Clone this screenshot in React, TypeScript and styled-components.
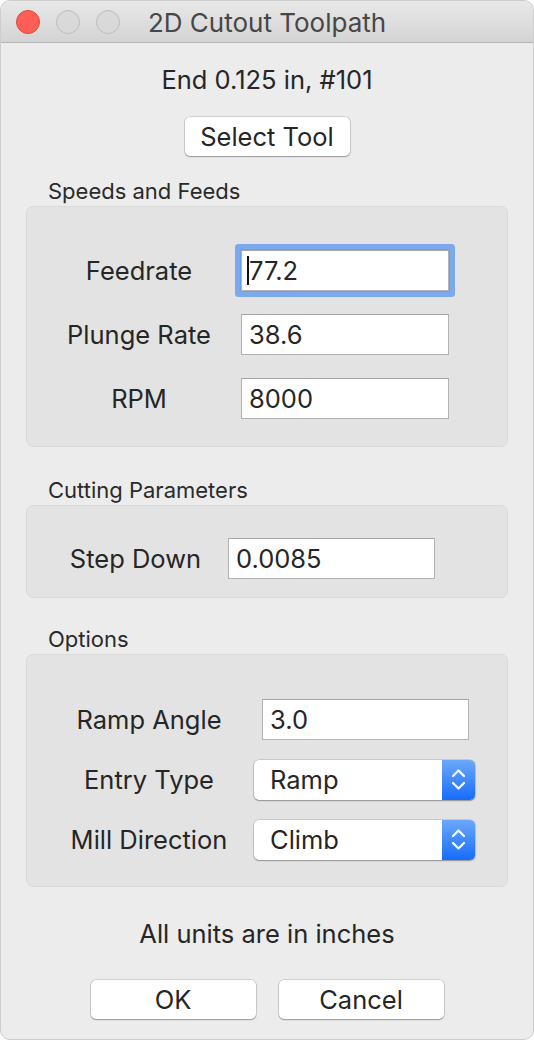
import React from 'react';
import styled, { createGlobalStyle } from 'styled-components';

const textColor = '#262626';
const bodySize = '25.5px';

const GlobalStyle = createGlobalStyle`
    html, body {
        margin: 0;
        padding: 0;
        background: #ffffff;
    }
    body {
        font-family: Inter, "Liberation Sans", Arial, sans-serif;
        -webkit-font-smoothing: antialiased;
    }
`;

const Window = styled.div`
    width: 534px;
    height: 1040px;
    box-sizing: border-box;
    background: #ececec;
    border: 1px solid #cdcdcd;
    border-radius: 10px;
    overflow: hidden;
    display: flex;
    flex-direction: column;
`;

const TitleBar = styled.div`
    height: 42px;
    box-sizing: border-box;
    background: linear-gradient(#e8e8e8, #d4d4d4);
    border-bottom: 1px solid #b6b6b6;
    display: grid;
    grid-template-columns: 1fr auto 1fr;
    align-items: center;
`;

const Lights = styled.div`
    display: flex;
    gap: 16px;
    padding-left: 15px;
`;

const Light = styled.span<{ $color: string; $edge: string }>`
    width: 24px;
    height: 24px;
    box-sizing: border-box;
    border-radius: 50%;
    background: ${p => p.$color};
    border: 1px solid ${p => p.$edge};
`;

const Title = styled.div`
    font-size: 26px;
    color: #474747;
    padding-top: 2px;
`;

const Content = styled.div`
    display: flex;
    flex-direction: column;
    padding: 0 25px;
`;

const Header = styled.div`
    margin-top: 22px;
    font-size: ${bodySize};
    line-height: 30px;
    color: ${textColor};
    text-align: center;
`;

const PushButton = styled.button<{ $width: number }>`
    width: ${p => p.$width}px;
    height: 39px;
    padding: 0;
    border: none;
    border-radius: 5px;
    background: #ffffff;
    box-shadow: 0 0 0 0.5px rgba(0, 0, 0, 0.22), 0 1px 1.5px rgba(0, 0, 0, 0.28);
    font-family: inherit;
    font-size: ${bodySize};
    color: ${textColor};
`;

const CenterRow = styled.div<{ $top: number }>`
    display: flex;
    justify-content: center;
    gap: 23px;
    margin-top: ${p => p.$top}px;
`;

const SectionLabel = styled.div<{ $top: number }>`
    margin-top: ${p => p.$top}px;
    margin-bottom: 2px;
    padding-left: 22px;
    font-size: 22px;
    line-height: 26px;
    color: #2a2a2a;
`;

const Group = styled.div<{ $height: number; $top: number; $gap: number; $indent: number }>`
    height: ${p => p.$height}px;
    box-sizing: border-box;
    background: #e3e3e3;
    border: 1px solid #dadada;
    border-radius: 7px;
    padding: ${p => p.$top}px 0 0 ${p => p.$indent}px;
    display: flex;
    flex-direction: column;
    gap: ${p => p.$gap}px;
`;

const Row = styled.div`
    display: flex;
    align-items: center;
    height: 41px;
`;

const Label = styled.div<{ $width: number }>`
    width: ${p => p.$width}px;
    text-align: center;
    font-size: ${bodySize};
    color: ${textColor};
`;

const Field = styled.div<{ $width: number; $focused?: boolean; $offset?: number }>`
    width: ${p => p.$width}px;
    height: 41px;
    box-sizing: border-box;
    margin-left: ${p => p.$offset ?? 0}px;
    background: #ffffff;
    border: 1px solid #b3b3b3;
    border-top-color: #a5a5a5;
    border-radius: ${p => (p.$focused ? '1px' : '0')};
    box-shadow: ${p => (p.$focused ? '0 0 0 1px #6f9fe6, 0 0 0 6px #7ca8ee' : 'none')};
    padding-left: 7px;
    display: flex;
    align-items: center;
    font-size: ${bodySize};
    color: ${textColor};
`;

const Caret = styled.span`
    display: inline-block;
    width: 2px;
    height: 29px;
    background: #111;
    margin-left: -2px;
`;

const Popup = styled.div`
    width: 221px;
    height: 40px;
    border-radius: 5px;
    background: #ffffff;
    box-shadow: 0 0 0 0.5px rgba(0, 0, 0, 0.22), 0 1px 1.5px rgba(0, 0, 0, 0.28);
    display: flex;
    overflow: hidden;
`;

const PopupText = styled.div`
    flex: 1;
    padding-left: 16px;
    display: flex;
    align-items: center;
    font-size: ${bodySize};
    color: ${textColor};
`;

const Stepper = styled.div`
    width: 33px;
    background: linear-gradient(#6ca8fb, #176cfc);
    display: flex;
    align-items: center;
    justify-content: center;
`;

const Footer = styled.div`
    margin-top: 32px;
    font-size: ${bodySize};
    line-height: 30px;
    color: ${textColor};
    text-align: center;
`;

const Chevrons: React.FC = () => (
    <svg width="15" height="23" viewBox="0 0 15 23" fill="none">
        <path d="M2 8 L7.5 2.5 L13 8" stroke="#fff" strokeWidth="2.2" strokeLinecap="round" strokeLinejoin="round" />
        <path d="M2 15 L7.5 20.5 L13 15" stroke="#fff" strokeWidth="2.2" strokeLinecap="round" strokeLinejoin="round" />
    </svg>
);

const Select: React.FC<{ value: string }> = ({ value }) => (
    <Popup>
        <PopupText>{value}</PopupText>
        <Stepper>
            <Chevrons />
        </Stepper>
    </Popup>
);

const App: React.FC = () => {
    return (
        <>
            <GlobalStyle />
            <Window>
                <TitleBar>
                    <Lights>
                        <Light $color="#fd5f57" $edge="#e0473f" />
                        <Light $color="#d9d9d9" $edge="#bdbdbd" />
                        <Light $color="#d9d9d9" $edge="#bdbdbd" />
                    </Lights>
                    <Title>2D Cutout Toolpath</Title>
                    <div />
                </TitleBar>
                <Content>
                    <Header>End 0.125 in, #101</Header>
                    <CenterRow $top={22}>
                        <PushButton $width={165}>Select Tool</PushButton>
                    </CenterRow>

                    <SectionLabel $top={22}>Speeds and Feeds</SectionLabel>
                    <Group $height={241} $top={43} $gap={23} $indent={10}>
                        <Row>
                            <Label $width={204}>Feedrate</Label>
                            <Field $width={208} $focused>
                                <Caret />77.2
                            </Field>
                        </Row>
                        <Row>
                            <Label $width={204}>Plunge Rate</Label>
                            <Field $width={208}>38.6</Field>
                        </Row>
                        <Row>
                            <Label $width={204}>RPM</Label>
                            <Field $width={208}>8000</Field>
                        </Row>
                    </Group>

                    <SectionLabel $top={30}>Cutting Parameters</SectionLabel>
                    <Group $height={93} $top={32} $gap={0} $indent={16}>
                        <Row>
                            <Label $width={185}>Step Down</Label>
                            <Field $width={207}>0.0085</Field>
                        </Row>
                    </Group>

                    <SectionLabel $top={28}>Options</SectionLabel>
                    <Group $height={233} $top={44} $gap={19} $indent={17}>
                        <Row>
                            <Label $width={210}>Ramp Angle</Label>
                            <Field $width={207} $offset={8}>3.0</Field>
                        </Row>
                        <Row>
                            <Label $width={210}>Entry Type</Label>
                            <Select value="Ramp" />
                        </Row>
                        <Row>
                            <Label $width={210}>Mill Direction</Label>
                            <Select value="Climb" />
                        </Row>
                    </Group>

                    <Footer>All units are in inches</Footer>
                    <CenterRow $top={31}>
                        <PushButton $width={165}>OK</PushButton>
                        <PushButton $width={165}>Cancel</PushButton>
                    </CenterRow>
                </Content>
            </Window>
        </>
    );
};

export default App;
